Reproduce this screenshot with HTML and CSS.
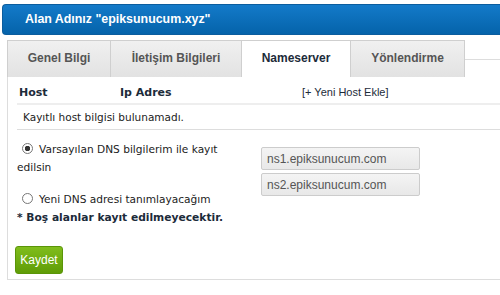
FILE: index.html
```html
<!DOCTYPE html>
<html lang="tr">
  <head>
    <meta charset="UTF-8" />
    <title>Alan Adı - Nameserver</title>
    <link rel="stylesheet" href="styles.css">
  </head>
  <body>
    <div class="domain-box">
      <div class="domain-header">Alan Adınız "epiksunucum.xyz"</div>

      <div class="tabs">
        <div class="tab">Genel Bilgi</div>
        <div class="tab">İletişim Bilgileri</div>
        <div class="tab active">Nameserver</div>
        <div class="tab">Yönlendirme</div>
        <div class="tab-rest"></div>
      </div>

      <div class="tab-panel">
        <div class="host-table">
          <div class="host-row head">
            <span class="col-host">Host</span>
            <span class="col-ip">Ip Adres</span>
            <span class="col-add">[+ Yeni Host Ekle]</span>
          </div>
          <div class="host-row empty">Kayıtlı host bilgisi bulunamadı.</div>
        </div>

        <div class="dns-form">
          <div class="dns-options">
            <label class="dns-option">
              <span class="radio checked"></span>Varsayılan DNS bilgilerim ile kayıt edilsin
            </label>
            <label class="dns-option second">
              <span class="radio"></span>Yeni DNS adresi tanımlayacağım
            </label>
          </div>
          <div class="dns-inputs">
            <input type="text" value="ns1.epiksunucum.com" readonly />
            <input type="text" value="ns2.epiksunucum.com" readonly />
          </div>
        </div>

        <p class="note">* Boş alanlar kayıt edilmeyecektir.</p>

        <button class="save-btn">Kaydet</button>
      </div>
    </div>
  </body>
</html>
```

FILE: styles.css
```css
body {
  margin: 0;
  width: 500px;
  overflow: hidden;
  background-color: #fff;
  font-family: "DejaVu Sans", Verdana, sans-serif;
  color: #1c2b3a;
}
.domain-box {
  width: 498px;
  padding: 4px 0 0 2px;
}
.domain-header {
  height: 29px;
  line-height: 29px;
  padding-left: 22px;
  background: linear-gradient(#137ac9, #0563aa);
  border: 1px solid #0b5d9e;
  border-right: none;
  border-radius: 4px 0 0 4px;
  color: #fff;
  font-family: "Liberation Sans", Arial, sans-serif;
  font-weight: bold;
  font-size: 12.4px;
}
.tabs {
  display: flex;
  margin: 5px 0 0 5px;
  height: 37px;
}
.tab {
  box-sizing: border-box;
  height: 37px;
  line-height: 35px;
  text-align: center;
  background: linear-gradient(#f0f0f0, #e2e2e2);
  border: 1px solid #cfcfcf;
  border-bottom: none;
  color: #555;
  font-family: "Liberation Sans", Arial, sans-serif;
  font-weight: bold;
  font-size: 12px;
}
.tab:nth-child(1) { width: 104px; }
.tab:nth-child(2) { width: 132px; margin-left: -1px; }
.tab:nth-child(3) { width: 110px; margin-left: -1px; }
.tab:nth-child(4) { width: 115px; margin-left: -1px; }
.tab.active {
  background: #fff;
  color: #1c2b3a;
}
.tab-rest {
  flex: 1;
  height: 19px;
  border-bottom: 1px solid #ddd;
}
.tab-panel {
  margin-left: 5px;
  padding: 0 0 5px 9px;
  border-left: 1px solid #ddd;
  border-bottom: 1px solid #ddd;
}
.host-row {
  display: flex;
  align-items: center;
  padding-left: 2px;
}
.host-row.head {
  box-sizing: border-box;
  height: 28px;
  padding-top: 4px;
  border-bottom: 2px solid #eee;
  font-weight: bold;
  font-size: 11px;
}
.col-host { width: 101px; }
.col-ip { width: 182px; }
.col-add {
  font-family: "Liberation Sans", Arial, sans-serif;
  font-weight: normal;
  font-size: 11px;
}
.host-row.empty {
  height: 24px;
  padding-left: 6px;
  border-bottom: 1px solid #ddd;
  font-size: 10.5px;
  color: #222;
}
.dns-form {
  display: flex;
  margin-top: 10px;
}
.dns-options {
  width: 210px;
  margin-right: 34px;
  font-size: 10.6px;
  color: #222;
}
.dns-option {
  display: block;
  line-height: 18px;
}
.dns-option.second {
  margin-top: 14px;
}
.radio {
  display: inline-block;
  box-sizing: border-box;
  width: 11px;
  height: 11px;
  margin: 0 6px 0 5px;
  vertical-align: -1px;
  border: 1px solid #777;
  border-radius: 50%;
  background: #fff;
}
.radio.checked {
  background: radial-gradient(circle, #333 0 2.5px, #fff 3px);
}
.dns-inputs {
  display: flex;
  flex-direction: column;
  gap: 3px;
  padding-top: 7px;
}
.dns-inputs input {
  box-sizing: border-box;
  width: 159px;
  height: 23px;
  margin: 0;
  padding: 0 5px;
  background: linear-gradient(#f4f4f4, #e8e8e8);
  border: 1px solid #ccc;
  border-radius: 2px;
  color: #555;
  font-family: "Liberation Sans", Arial, sans-serif;
  font-size: 12px;
}
.note {
  margin: 3px 0 0;
  font-weight: bold;
  font-size: 10.7px;
}
.save-btn {
  display: block;
  margin: 22px 0 0 -2px;
  width: 48px;
  height: 28px;
  padding: 0;
  background: linear-gradient(#80bd1c, #5f9c07);
  border: 1px solid #5a9508;
  border-radius: 3px;
  color: #fff;
  font-family: "Liberation Sans", Arial, sans-serif;
  font-size: 12px;
}
```
